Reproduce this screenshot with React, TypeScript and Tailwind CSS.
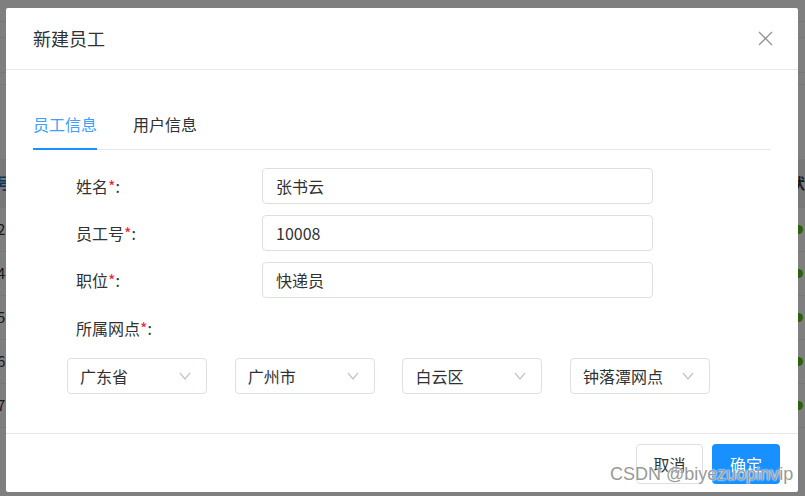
import React from 'react';

const rows = ['2', '4', '5', '6', '7'];

const Field = ({ label, value }: { label: string; value: string }) => (
  <div className="flex items-center">
    <div className="w-[256px] pl-[70px] text-[16px] text-[#303133]">
      {label}
      <span className="text-[#f5222d]">*</span>:
    </div>
    <div className="flex h-[36px] w-[391px] items-center rounded-[4px] border border-[#dcdfe6] px-[13px] text-[16px] text-[#303133]">
      {value}
    </div>
  </div>
);

const Select = ({ value }: { value: string }) => (
  <div className="flex h-[36px] w-[140px] items-center justify-between rounded-[4px] border border-[#dcdfe6] pl-[12px] pr-[15px] text-[16px] text-[#303133]">
    <span>{value}</span>
    <svg width="12" height="8" viewBox="0 0 12 8" fill="none" stroke="#c0c4cc" strokeWidth="1.2">
      <path d="M1 1l5 6 5-6" />
    </svg>
  </div>
);

export default function App() {
  return (
    <div className="relative h-[496px] w-[805px] overflow-hidden bg-white font-['Noto_Sans_CJK_SC','Noto_Sans',sans-serif]">
      {/* page behind the dialog */}
      <div className="flex h-[22px] border-b border-[#eeeeee]" />
      <div className="h-[16px] border-b border-[#eeeeee]" />
      <div className="h-[35px] border-b border-[#eeeeee]" />
      <div className="h-[12px] border-b border-[#eeeeee]" />
      <div className="h-[74px]" />
      <div className="flex h-[48px] items-center justify-between bg-[#f0f0f0] text-[15px] font-bold">
        <span className="-ml-[4px] text-[#1f6fb5]">号</span>
        <span className="text-[#333]">状</span>
      </div>
      {rows.map((r) => (
        <div key={r} className="flex h-[44px] items-center justify-between border-t border-[#eeeeee] text-[15px] text-[#333]">
          <span className="-ml-[3px]">{r}</span>
          <span className="mr-[2px] h-[9px] w-[9px] rounded-full bg-[#52c41a]" />
        </div>
      ))}
      <div className="border-t border-[#eeeeee]" />

      {/* mask */}
      <div className="absolute inset-0 bg-black/50" />

      {/* dialog */}
      <div className="absolute left-[6px] top-[8px] flex h-[484px] w-[792px] flex-col overflow-hidden rounded-[2px] bg-white">
        <div className="flex h-[62px] shrink-0 items-center justify-between border-b border-[#e8e8e8] pl-[27px] pr-[25px]">
          <span className="text-[18px] text-[#303133]">新建员工</span>
          <svg width="15" height="15" viewBox="0 0 15 15" stroke="#909399" strokeWidth="1.3">
            <path d="M1 1l13 13M14 1L1 14" />
          </svg>
        </div>

        <div className="px-[27px] pt-[42px]">
          <div className="flex gap-[36px] border-b border-[#e4e7ed] text-[16px]">
            <div className="-mb-px border-b-2 border-[#1890ff] pb-[12px] text-[#409eff]">员工信息</div>
            <div className="-mb-px pb-[12px] text-[#303133]">用户信息</div>
          </div>
        </div>

        <div className="flex flex-col gap-[11px] pt-[18px]">
          <Field label="姓名" value="张书云" />
          <Field label="员工号" value="10008" />
          <Field label="职位" value="快递员" />
        </div>

        <div className="pl-[70px] pt-[18px] text-[16px] text-[#303133]">
          所属网点<span className="text-[#f5222d]">*</span>:
        </div>

        <div className="flex gap-[27.7px] pl-[61px] pt-[18px]">
          <Select value="广东省" />
          <Select value="广州市" />
          <Select value="白云区" />
          <Select value="钟落潭网点" />
        </div>

        <div className="mt-[39px] flex justify-end gap-[9px] border-t border-[#e8e8e8] pr-[18px] pt-[10px]">
          <button className="h-[40px] w-[67px] rounded-[4px] border border-[#dcdfe6] bg-white text-[16px] text-[#303133]">
            取消
          </button>
          <button className="h-[40px] w-[68px] rounded-[4px] bg-[#1890ff] text-[16px] text-white">
            确定
          </button>
        </div>
      </div>

      {/* watermark */}
      <div className="absolute left-[610px] top-[463px] font-['Liberation_Sans',sans-serif] text-[18px] leading-[22px] text-[#999999] [text-shadow:0_0_2px_#fff,0_0_2px_#fff]">
        CSDN @biyezuopinvip
      </div>
    </div>
  );
}
